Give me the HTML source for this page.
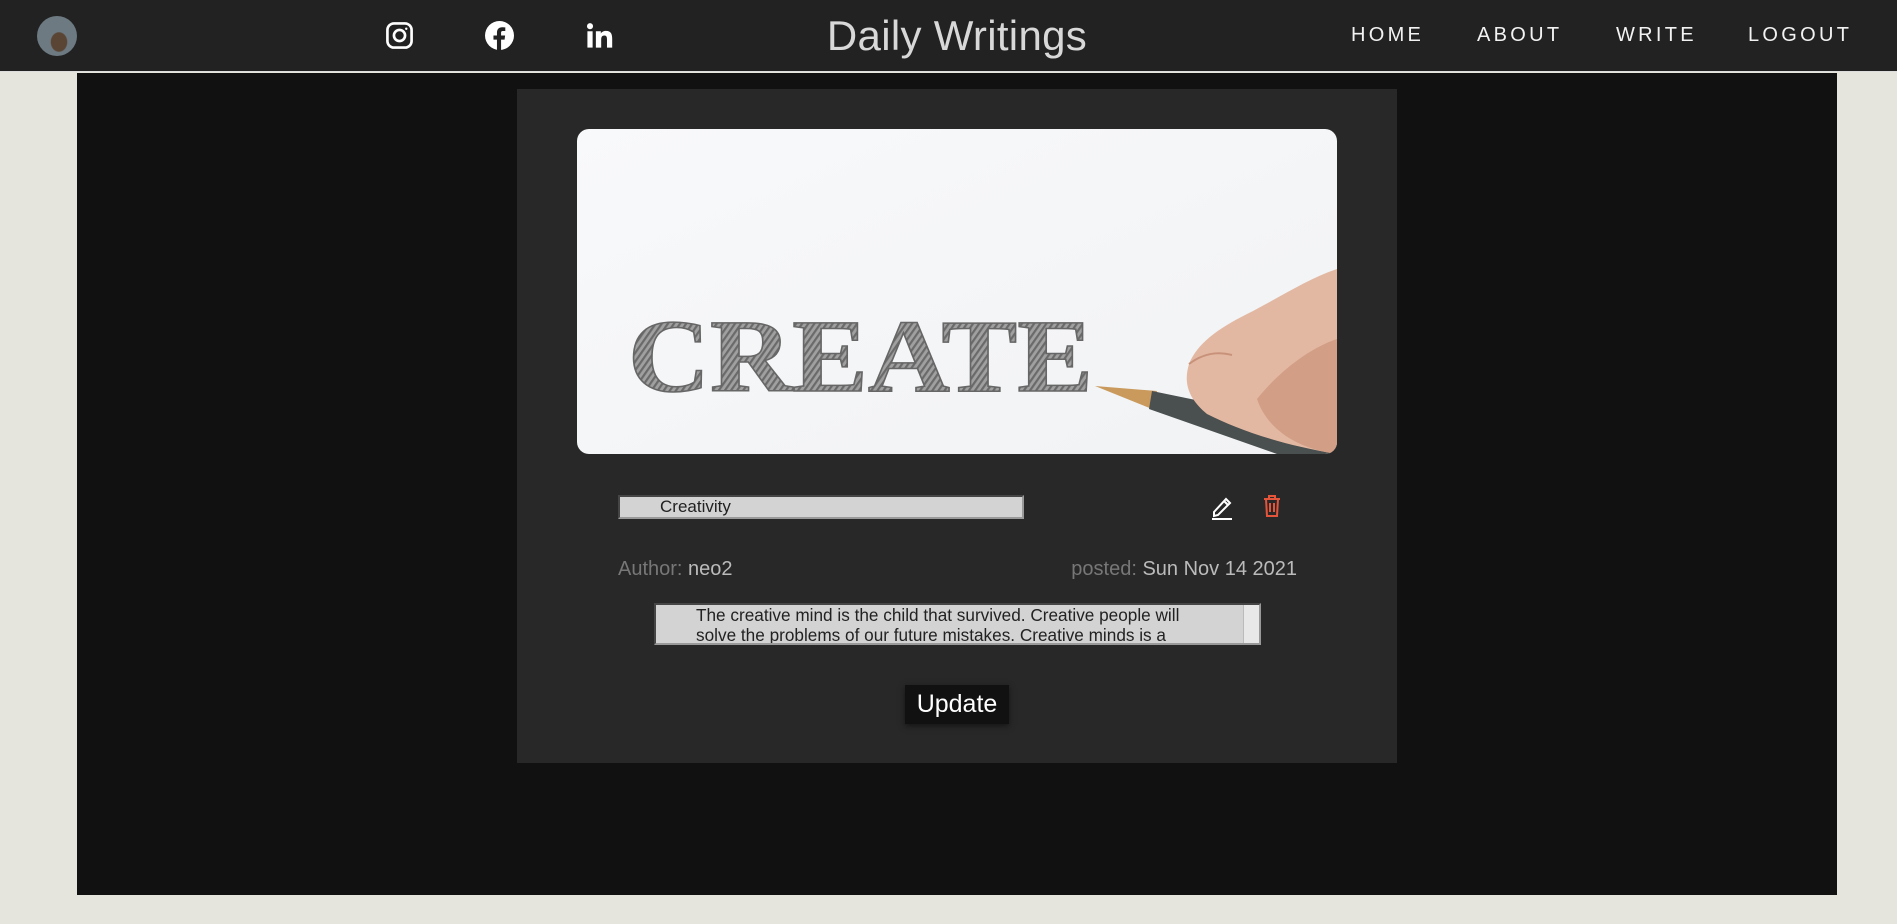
<!DOCTYPE html>
<html><head><meta charset="utf-8"><style>
*{margin:0;padding:0;box-sizing:border-box}
body{width:1897px;height:924px;background:#e5e5dd;font-family:"Liberation Sans",sans-serif;position:relative;overflow:hidden}
.hdr{position:absolute;left:0;top:0;width:1897px;height:72px;background:#222;border-bottom:1px solid #ddd}
.av{position:absolute;left:37px;top:16px;width:40px;height:40px;border-radius:50%;background:radial-gradient(ellipse at 55% 65%,#5a4535 0 25%,#6d7a82 28%)}
.ic{position:absolute;top:21px;width:29px;height:29px}
.title{position:absolute;left:0;width:1914px;text-align:center;top:12px;font-size:42px;color:#d8d8d8;letter-spacing:0.3px}
.nav{position:absolute;top:24px;font-size:20px;color:#f2f2f2;letter-spacing:3.3px}
.main{position:absolute;left:77px;top:73px;width:1760px;height:822px;background:#111}
.card{position:absolute;left:517px;top:89px;width:880px;height:674px;background:#282828}
.img{position:absolute;left:577px;top:129px;width:760px;height:325px;border-radius:12px;overflow:hidden}
.tin{position:absolute;left:618px;top:495px;width:406px;height:24px;background:#d3d3d3;border:2px inset #999;font-size:17px;color:#222;padding-left:40px;line-height:20px}
.meta{position:absolute;top:558px;font-size:20px}
.ta{position:absolute;left:654px;top:603px;width:607px;height:42px;background:#d3d3d3;border:2px inset #999;font-size:17.2px;color:#222;padding:0 40px 0 40px;line-height:20px;overflow:hidden}
.sb{position:absolute;right:0;top:0;width:16px;height:38px;background:#e8e8e8;border-left:1px solid #bbb}
.btn{position:absolute;left:905px;top:685px;width:104px;height:39px;background:#111;color:#fff;font-size:25px;text-align:center;line-height:39px;box-shadow:0 2px 6px rgba(0,0,0,.5)}
</style></head><body>
<div class="hdr">
<div class="av"></div>
<svg class="ic" style="left:385px" viewBox="0 0 24 24" fill="none" stroke="#fff" stroke-width="2.2"><rect x="2" y="2" width="20" height="20" rx="5.5"/><circle cx="12" cy="12" r="4.6"/><circle cx="17.6" cy="6.4" r="1" fill="#fff" stroke="none"/></svg>
<svg class="ic" style="left:485px" viewBox="0 0 24 24"><circle cx="12" cy="12" r="12" fill="#fff"/><path d="M13.3 24v-8.6h2.9l.45-3.4h-3.35V9.9c0-1 .3-1.6 1.7-1.6h1.8V5.3c-.3 0-1.4-.15-2.6-.15-2.6 0-4.3 1.6-4.3 4.5v2.350H7v3.4h2.9V24z" fill="#222"/></svg>
<svg class="ic" style="left:585px" viewBox="0 0 24 24" fill="#fff"><rect x="2" y="8.5" width="4.3" height="13.5"/><circle cx="4.15" cy="4.3" r="2.5"/><path d="M9 8.5h4.1v1.9c.6-1.1 2-2.2 4.2-2.2 4.4 0 5.2 2.9 5.2 6.6V22h-4.3v-6.4c0-1.6 0-3.6-2.2-3.6s-2.6 1.7-2.6 3.5V22H9z"/></svg>
<div class="title">Daily Writings</div>
<div class="nav" style="left:1351px">HOME</div>
<div class="nav" style="left:1477px">ABOUT</div>
<div class="nav" style="left:1616px">WRITE</div>
<div class="nav" style="left:1748px">LOGOUT</div>
</div>
<div class="main"></div>
<div class="card"></div>
<div class="img"><svg width="760" height="325" viewBox="0 0 760 325">
<defs><linearGradient id="bg" x1="0" y1="0" x2="1" y2="1"><stop offset="0" stop-color="#f8f9fb"/><stop offset="1" stop-color="#f1f2f4"/></linearGradient>
<pattern id="h" width="5" height="5" patternUnits="userSpaceOnUse" patternTransform="rotate(35)"><rect width="5" height="5" fill="#a0a0a0"/><rect width="2.2" height="5" fill="#6a6a6a"/></pattern></defs>
<rect width="760" height="325" fill="url(#bg)"/>
<text x="51" y="262" font-family="Liberation Serif,serif" font-weight="bold" font-size="104" textLength="465" lengthAdjust="spacingAndGlyphs" fill="url(#h)" stroke="#666" stroke-width="1.5">CREATE</text>
<path d="M518 257 L580 262 L575 280Z" fill="#c99a5c"/>
<path d="M575 262 L760 300 L760 325 L700 325 L572 280Z" fill="#4a4f4f"/>
<path d="M760 140 C730 150 700 170 670 185 C640 200 620 215 612 235 C606 255 612 270 630 285 C660 300 700 315 760 325Z" fill="#e3b8a2"/>
<path d="M760 210 C730 220 700 245 680 270 C690 300 720 320 760 325Z" fill="#d29e86"/>
<path d="M612 235 C625 225 640 222 655 226" stroke="#c8927a" stroke-width="2" fill="none"/>
</svg></div>
<div class="tin">Creativity</div>
<svg style="position:absolute;left:1210px;top:494px" width="24" height="26" viewBox="0 0 24 26" fill="none" stroke="#fff" stroke-width="2"><path d="M4 18 L16 5 L20 9 L8 21 L4 22Z M14 7 L18 11"/><path d="M2 25H22"/></svg>
<svg style="position:absolute;left:1262px;top:494px" width="20" height="24" viewBox="0 0 20 24" fill="none" stroke="#e4553c" stroke-width="2"><path d="M2 5H18M7 5V2H13V5M4 5L5 22H15L16 5M8 9V18M12 9V18"/></svg>
<div class="meta" style="left:618px;color:#777">Author: <span style="color:#bbb">neo2</span></div>
<div class="meta" style="right:600px;color:#777">posted: <span style="color:#bbb">Sun Nov 14 2021</span></div>
<div class="ta">The creative mind is the child that survived. Creative people will solve the problems of our future mistakes. Creative minds is a<div class="sb"></div></div>
<div class="btn">Update</div>
</body></html>
